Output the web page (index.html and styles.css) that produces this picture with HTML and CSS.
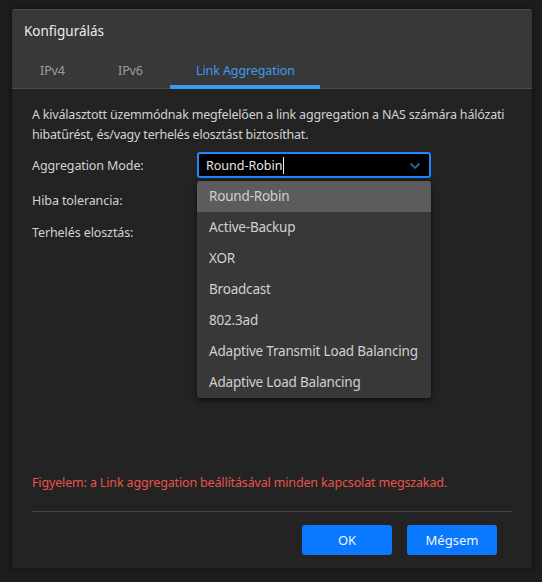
FILE: index.html
```html
<!DOCTYPE html>
<html lang="hu">
<head>
<meta charset="utf-8">
<title>Konfigurálás</title>
<link rel="stylesheet" href="styles.css">
</head>
<body>
<div class="dialog">
  <div class="header">
    <div class="title">Konfigurálás</div>
    <div class="tabs">
      <div class="tab">IPv4</div>
      <div class="tab">IPv6</div>
      <div class="tab active">Link Aggregation</div>
    </div>
  </div>
  <div class="content">
    <p class="desc">A kiválasztott üzemmódnak megfelelően a link aggregation a NAS számára hálózati hibatűrést, és/vagy terhelés elosztást biztosíthat.</p>
    <div class="row first">
      <div class="label">Aggregation Mode:</div>
      <div class="select-wrap">
        <div class="select">
          <span class="value">Round-Robin</span><span class="caret"></span>
          <svg class="chev" width="12" height="8" viewBox="0 0 12 8"><path d="M1.5 1.5 L6 6 L10.5 1.5" fill="none" stroke="#1d6aa3" stroke-width="1.8"/></svg>
        </div>
        <ul class="menu">
          <li class="item hover">Round-Robin</li>
          <li class="item">Active-Backup</li>
          <li class="item">XOR</li>
          <li class="item">Broadcast</li>
          <li class="item">802.3ad</li>
          <li class="item">Adaptive Transmit Load Balancing</li>
          <li class="item">Adaptive Load Balancing</li>
        </ul>
      </div>
    </div>
    <div class="row">
      <div class="label">Hiba tolerancia:</div>
    </div>
    <div class="row">
      <div class="label">Terhelés elosztás:</div>
    </div>
  </div>
  <div class="footer">
    <p class="warn">Figyelem: a Link aggregation beállításával minden kapcsolat megszakad.</p>
    <div class="divider"></div>
    <div class="buttons">
      <button class="btn">OK</button>
      <button class="btn">Mégsem</button>
    </div>
  </div>
</div>
</body>
</html>
```
FILE: styles.css
```css
html, body {
  margin: 0;
  padding: 0;
  background: #1d1d1d;
  font-family: "Noto Sans", "Open Sans", sans-serif;
  font-size: 12.5px;
  color: #d2d2d2;
}
body {
  padding: 9px 0 0 12px;
  height: 582px;
  box-sizing: border-box;
}
.dialog {
  width: 520px;
  height: 559px;
  background: #232323;
  border-radius: 3px;
  box-shadow: 0 0 6px rgba(0,0,0,0.5);
  display: flex;
  flex-direction: column;
  overflow: hidden;
}
.header {
  background: #383838;
  height: 80px;
  border-bottom: 1px solid #4c4c4c;
  border-top: 1px solid #4a4a4a;
  box-sizing: border-box;
  display: flex;
  flex-direction: column;
}
.title {
  font-size: 13.5px;
  color: #ececec;
  padding: 11px 0 0 12px;
  line-height: 20px;
}
.tabs {
  display: flex;
  padding-left: 2px;
  margin-top: auto;
  margin-bottom: -1px;
}
.tab {
  width: 78px;
  padding-left: 26px;
  height: 34px;
  line-height: 32px;
  color: #9e9e9e;
  box-sizing: border-box;
  border-bottom: 4px solid transparent;
  letter-spacing: -0.1px;
  white-space: nowrap;
}
.tab.active {
  width: 150px;
  color: #3f9ced;
  border-bottom-color: #3a9bf4;
}
.content {
  flex: 1;
  padding: 16px 20px 0;
  position: relative;
}
.desc {
  margin: 0;
  line-height: 20px;
  letter-spacing: -0.2px;
}
.row {
  display: flex;
  align-items: center;
  height: 32px;
}
.row.first {
  margin-top: 4px;
  margin-bottom: 3px;
}
.label {
  width: 165px;
  flex: none;
  letter-spacing: -0.1px;
}
.select-wrap {
  position: relative;
}
.select {
  width: 234px;
  height: 26px;
  box-sizing: border-box;
  background: #000;
  border: 2px solid #1a88ff;
  border-radius: 3px;
  display: flex;
  align-items: center;
  padding-left: 7px;
  color: #e6e6e6;
  position: relative;
}
.caret {
  display: inline-block;
  width: 1px;
  height: 17px;
  background: #f0f0f0;
  margin-left: 1px;
}
.chev {
  position: absolute;
  right: 8px;
  top: 8px;
}
.menu {
  position: absolute;
  left: 0;
  top: 29px;
  width: 234px;
  margin: 0;
  padding: 0;
  list-style: none;
  background: #383838;
  border-radius: 3px;
  box-shadow: 0 2px 6px rgba(0,0,0,0.6);
  z-index: 2;
}
.item {
  height: 31px;
  line-height: 31px;
  padding-left: 12px;
  color: #d0d0d0;
  font-size: 13.5px;
  letter-spacing: -0.2px;
}
.item.hover {
  background: #5c5c5c;
  border-radius: 3px 3px 0 0;
}
.footer {
  padding: 0 20px 13px;
}
.warn {
  margin: 0;
  line-height: 20px;
  color: #e8544c;
  letter-spacing: -0.15px;
}
.divider {
  height: 1px;
  background: #444;
  margin-top: 18px;
}
.buttons {
  display: flex;
  justify-content: flex-end;
  gap: 15px;
  margin-top: 13px;
  padding-right: 15px;
}
.btn {
  width: 90px;
  height: 30px;
  border: none;
  border-radius: 3px;
  background: #0a78ff;
  color: #f4f4f4;
  font-family: inherit;
  font-size: 13px;
  cursor: pointer;
}
```
